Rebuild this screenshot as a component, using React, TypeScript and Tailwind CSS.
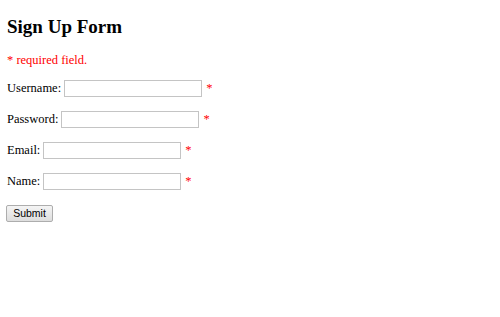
export default function App() {
  const fields = [
    { label: 'Username:', type: 'text' },
    { label: 'Password:', type: 'password' },
    { label: 'Email:', type: 'text' },
    { label: 'Name:', type: 'text' },
  ]

  return (
    <div className="min-h-[317px] bg-white px-[7px] pt-[15px] font-['Liberation_Serif',serif] text-[12.5px] text-black">
      <h2 className="text-[19px] font-bold leading-[23px]">Sign Up Form</h2>

      <p className="mt-[15px] leading-[15px] text-[#ff0000]">* required field.</p>

      <form className="mt-[12px] flex flex-col gap-[14px]" onSubmit={(e) => e.preventDefault()}>
        {fields.map((field) => (
          <div key={field.label} className="flex h-[17px] items-center">
            <label className="mr-[3px] leading-[15px]">{field.label}</label>
            <input
              type={field.type}
              className="h-[17px] w-[138px] border border-[#c4c4c4] bg-white px-[2px] text-[10px] outline-none"
            />
            <span className="ml-[4px] self-start pt-[3px] leading-[10px] text-[#ff0000]">*</span>
          </div>
        ))}

        <div>
          <button
            type="submit"
            className="-ml-px h-[17px] w-[47px] rounded-[2px] border border-[#adadad] bg-gradient-to-b from-[#f4f4f4] to-[#dedede] font-['Liberation_Sans',sans-serif] text-[10.5px] leading-[15px] text-black"
          >
            Submit
          </button>
        </div>
      </form>
    </div>
  )
}
